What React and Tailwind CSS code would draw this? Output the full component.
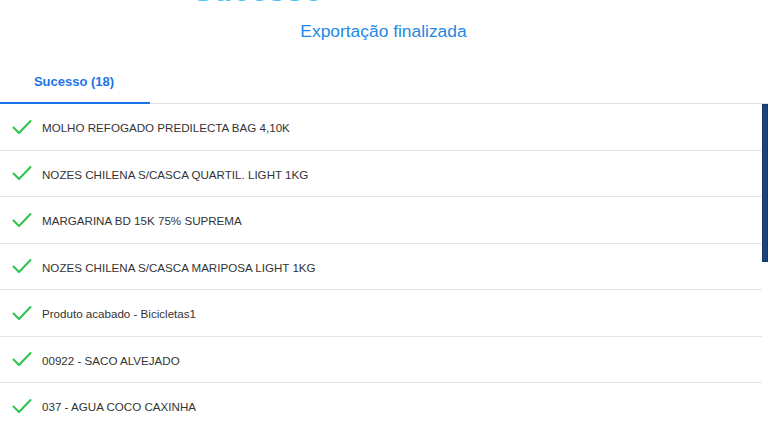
import React from "react";

const items = [
  "MOLHO REFOGADO PREDILECTA BAG 4,10K",
  "NOZES CHILENA S/CASCA QUARTIL. LIGHT 1KG",
  "MARGARINA BD 15K 75% SUPREMA",
  "NOZES CHILENA S/CASCA MARIPOSA LIGHT 1KG",
  "Produto acabado - Bicicletas1",
  "00922 - SACO ALVEJADO",
  "037 - AGUA COCO CAXINHA",
  "ARROZ BRANCO TIPO 1 5KG",
];

function Check() {
  return (
    <svg width="20" height="16" viewBox="0 0 20 16" className="shrink-0">
      <polyline
        points="1.5,8.5 7,14 18.5,2"
        fill="none"
        stroke="#2dc34d"
        strokeWidth="2"
        strokeLinecap="round"
        strokeLinejoin="round"
      />
    </svg>
  );
}

export default function App() {
  return (
    <div
      className="w-[768px] h-[423px] overflow-hidden bg-white flex flex-col"
      style={{ fontFamily: '"Liberation Sans", Arial, sans-serif' }}
    >
      <div className="h-[5px] overflow-hidden flex justify-center items-end shrink-0">
        <div className="text-[30px] leading-none font-bold text-[#4fc3f7] ml-[-252px] mb-[-1px] tracking-[1px]">
          Sucesso
        </div>
      </div>
      <div className="flex justify-center pt-[15px] shrink-0">
        <div className="text-[17.4px] leading-[22px] text-[#1e88e5] ml-[-1px]">
          Exportação finalizada
        </div>
      </div>
      <div className="mt-[30px] border-b border-[#e3e3e3] flex shrink-0">
        <div className="w-[150px] h-[32px] flex items-start justify-center border-b-2 border-[#1a73e8] -mb-px">
          <span className="text-[13px] font-bold text-[#1a73e8] leading-[20px] ml-[-2px]">
            Sucesso (18)
          </span>
        </div>
      </div>
      <div className="flex flex-1 min-h-0">
        <div className="flex-1 flex flex-col">
          {items.map((t, i) => (
            <div
              key={i}
              className="h-[46.5px] shrink-0 flex items-center border-b border-[#e5e5e5] pl-[12px] gap-[10px]"
            >
              <Check />
              <span className="text-[11.6px] text-[#333333] mt-[2px]">{t}</span>
            </div>
          ))}
        </div>
        <div className="w-[6px] shrink-0">
          <div className="h-[158px] bg-[#1c4580] border border-[#163a6e]" />
        </div>
      </div>
    </div>
  );
}
